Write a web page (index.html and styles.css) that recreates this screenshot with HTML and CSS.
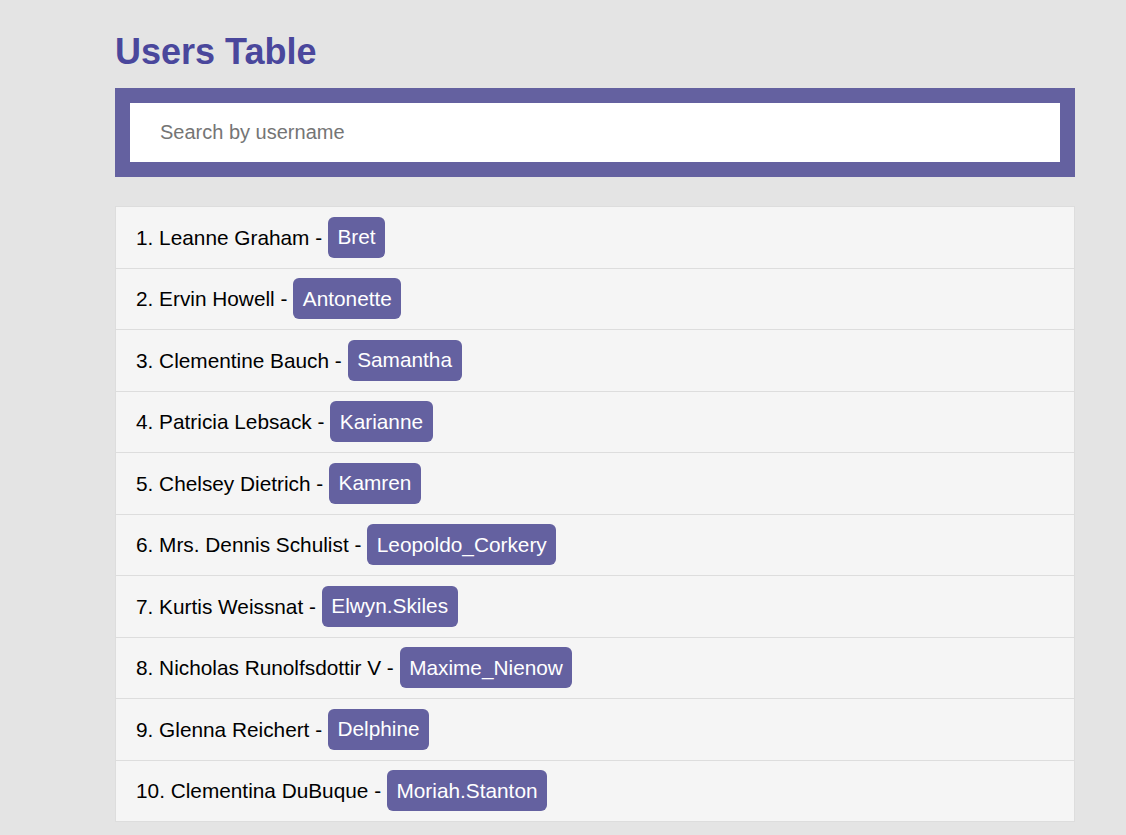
FILE: index.html
```html
<!DOCTYPE html>
<html lang="en">
<head>
<meta charset="utf-8">
<title>Users Table</title>
<link rel="stylesheet" href="styles.css">
</head>
<body>
<div class="container">
  <h1 class="title">Users Table</h1>
  <div class="search-box">
    <input class="search-input" type="text" placeholder="Search by username">
  </div>
  <ul class="user-list">
    <li class="user-row">1. Leanne Graham - <span class="badge">Bret</span></li>
    <li class="user-row">2. Ervin Howell - <span class="badge">Antonette</span></li>
    <li class="user-row">3. Clementine Bauch - <span class="badge">Samantha</span></li>
    <li class="user-row">4. Patricia Lebsack - <span class="badge">Karianne</span></li>
    <li class="user-row">5. Chelsey Dietrich - <span class="badge">Kamren</span></li>
    <li class="user-row">6. Mrs. Dennis Schulist - <span class="badge">Leopoldo_Corkery</span></li>
    <li class="user-row">7. Kurtis Weissnat - <span class="badge">Elwyn.Skiles</span></li>
    <li class="user-row">8. Nicholas Runolfsdottir V - <span class="badge">Maxime_Nienow</span></li>
    <li class="user-row">9. Glenna Reichert - <span class="badge">Delphine</span></li>
    <li class="user-row">10. Clementina DuBuque - <span class="badge">Moriah.Stanton</span></li>
  </ul>
</div>
</body>
</html>
```

FILE: styles.css
```css
html, body {
  margin: 0;
  padding: 0;
  background: #e4e4e4;
  font-family: "Liberation Sans", Arial, sans-serif;
}

.container {
  width: 960px;
  margin-left: 115px;
}

.title {
  margin: 31px 0 15px;
  font-size: 36px;
  font-weight: bold;
  color: #4a479c;
  line-height: normal;
}

.search-box {
  background: #6461a0;
  padding: 15px;
}

.search-input {
  display: block;
  box-sizing: border-box;
  width: 100%;
  height: 59px;
  border: none;
  outline: none;
  padding: 0 30px;
  font-family: "Liberation Sans", Arial, sans-serif;
  font-size: 20px;
  color: #333;
  background: #fff;
}

.search-input::placeholder {
  color: #757575;
}

.user-list {
  list-style: none;
  margin: 29px 0 0;
  padding: 0;
  border: 1px solid #dddddd;
  border-bottom: none;
  background: #f5f5f5;
}

.user-row {
  padding: 9.75px 20px;
  border-bottom: 1px solid #dddddd;
  font-size: 20.8px;
  color: #000;
  line-height: 41px;
  height: 41px;
}

.badge {
  display: inline-block;
  vertical-align: top;
  background: #6461a0;
  color: #fff;
  padding: 8.5px 9.6px;
  line-height: 24px;
  border-radius: 6px;
}
```
